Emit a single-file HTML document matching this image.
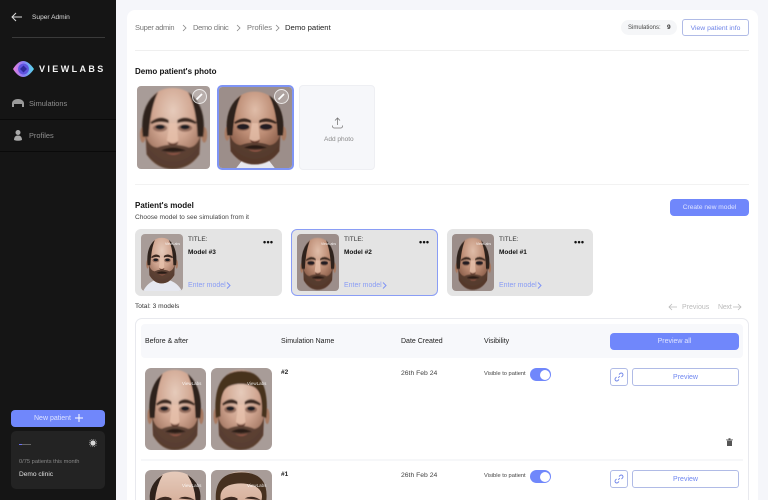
<!DOCTYPE html>
<html><head><meta charset="utf-8">
<style>
html,body{margin:0;padding:0;width:768px;height:500px;overflow:hidden}
#w{position:absolute;left:0;top:0;width:768px;height:500px;overflow:hidden;background:#f5f6fa;font-family:"Liberation Sans",sans-serif;color:#1c1c1c}
.a{position:absolute;white-space:nowrap;line-height:1}
.b{position:absolute;box-sizing:border-box}
.btn{position:absolute;box-sizing:border-box;background:#7087fb;color:#e8ecff;border-radius:4px;text-align:center;font-size:6.600px}
.out{position:absolute;box-sizing:border-box;background:#fff;border:1px solid #b0bbe6;border-radius:3px;color:#7087f0;text-align:center;font-size:7px}
svg{position:absolute;display:block}
.s{font-weight:bold}
.wm{position:absolute;white-space:nowrap;line-height:1;font-size:3.500px;color:#fff;opacity:.85}
</style></head><body><div id="w">
<svg width="0" height="0" style="position:absolute">
<defs>
<radialGradient id="sk" cx=".5" cy=".28" r=".72"><stop offset="0" stop-color="#e6cbbb"/><stop offset=".5" stop-color="#d0a590"/><stop offset="1" stop-color="#8f634f"/></radialGradient>
<radialGradient id="sk2" cx=".5" cy=".25" r=".72"><stop offset="0" stop-color="#e0bda9"/><stop offset=".5" stop-color="#bd8d75"/><stop offset="1" stop-color="#7a4e3b"/></radialGradient>
<linearGradient id="skt" x1="0" y1="0" x2="0" y2="1"><stop offset="0" stop-color="#e6cbbb"/><stop offset="1" stop-color="#d8b29e"/></linearGradient>
<filter id="bl" x="-5%" y="-5%" width="110%" height="110%"><feGaussianBlur stdDeviation=".7"/></filter>
<g id="feat">
<path d="M9 50Q12 62 21 63Q29 60 37 60Q46 60 54 63Q63 62 66 50L65 70Q54 85 37 85Q21 85 10 70Z" fill="#4c3428" opacity=".84"/>
<path d="M14 37Q24 29 33 35L33 38Q24 35 15 39Z" fill="#3e2a21"/><path d="M42 35Q51 29 62 37L61 39Q51 35 42 38Z" fill="#3e2a21"/>
<ellipse cx="24" cy="43" rx="7.500" ry="3.800" fill="#7d5748" opacity=".7"/><ellipse cx="50" cy="43" rx="7.500" ry="3.800" fill="#7d5748" opacity=".7"/>
<ellipse cx="24" cy="42" rx="5" ry="2.400" fill="#1f1d20"/><ellipse cx="50" cy="42" rx="5" ry="2.400" fill="#1f1d20"/>
<path d="M34 38L31 56Q37 60 43 56L41 38Z" fill="#e8c3ad" opacity=".75"/>
<path d="M32 57Q37 61 43 57L42 59.500Q37 62 33 59.500Z" fill="#5e382c"/>
<path d="M25 66Q37 60 51 66Q37 69 25 66Z" fill="#2c1b16"/><path d="M30 68Q37 70 46 68Q38 73 30 68Z" fill="#965848"/>
</g>
<g id="ears"><ellipse cx="6" cy="50" rx="3" ry="8" fill="#a87a62"/><ellipse cx="70" cy="50" rx="3" ry="8" fill="#a87a62"/></g>
<path id="skull" d="M8 42Q8 2 37 2Q66 2 67 42L65 70Q55 85 37 85Q20 85 10 70Z"/>
<g id="sides"><path d="M6 52Q2 20 22 6Q14 22 12 52Z" fill="#2f221b"/><path d="M69 52Q73 20 53 6Q62 22 63 52Z" fill="#2f221b"/></g>
<g id="lt"><g filter="url(#bl)"><use href="#ears"/><use href="#skull" fill="url(#sk)"/><use href="#sides"/><use href="#feat"/></g></g>
<g id="dk"><g filter="url(#bl)"><use href="#ears"/><use href="#skull" fill="url(#sk2)"/><use href="#sides"/><use href="#feat"/><ellipse cx="24" cy="42" rx="7" ry="3.300" fill="#241f22"/><ellipse cx="50" cy="42" rx="7" ry="3.300" fill="#241f22"/></g></g>
</defs></svg>
<svg width="0" height="0" style="position:absolute"><defs>
<symbol id="f" viewBox="0 0 76 85" preserveAspectRatio="none"><rect width="76" height="85" fill="#a89c98"/><use href="#lt"/></symbol>
<symbol id="d" viewBox="0 0 76 85" preserveAspectRatio="none"><rect width="76" height="85" fill="#9c8e8a"/><path d="M18 85L28 72H48L58 85Z" fill="#e8e8ee"/><use href="#dk" transform="translate(3,3) scale(.92)"/></symbol>
<symbol id="c" viewBox="0 0 76 85" preserveAspectRatio="none"><rect width="76" height="85" fill="#a89c98"/><path d="M4 85Q12 72 28 68H48Q66 72 74 85Z" fill="#e6e8f0"/><use href="#lt" transform="translate(7,4) scale(.82)"/></symbol>
<symbol id="m" viewBox="0 0 76 85" preserveAspectRatio="none"><rect width="76" height="85" fill="#9c8e8a"/><use href="#dk" transform="translate(3,4) scale(.93)"/></symbol>
<symbol id="h" viewBox="0 0 76 85" preserveAspectRatio="none"><rect width="76" height="85" fill="#a89c98"/><g filter="url(#bl)"><use href="#ears"/><use href="#skull" fill="url(#sk)"/><path d="M6 52Q1 3 38 3Q74 3 69 52L63 50Q66 24 52 19Q37 14 22 19Q10 24 12 50Z" fill="#46301f"/><use href="#feat"/></g></symbol>
</defs></svg>

<!-- sidebar -->
<div class="b" style="left:0;top:0;width:116px;height:500px;background:#151515"></div>
<svg style="left:11px;top:11px" width="12" height="12" viewBox="0 0 12 12" fill="none" stroke="#ddd" stroke-width="1"><path d="M11 6H1M5 2L1 6L5 10"/></svg>
<div class="a" style="left:32px;top:15px;font-size:6.600px;color:#ddd">Super Admin</div>
<div class="b" style="left:12px;top:37px;width:93px;height:1px;background:#3a3a3a"></div>
<svg style="left:13px;top:61px" width="21" height="16" viewBox="0 0 21 16"><defs><linearGradient id="lg" x1="0" x2="1"><stop offset="0" stop-color="#ea80de"/><stop offset=".5" stop-color="#8a7cf5"/><stop offset="1" stop-color="#56dcec"/></linearGradient></defs><path d="M0 8Q10 -8 21 8Q10 24 0 8Z" fill="url(#lg)"/><circle cx="10.500" cy="8" r="5.400" fill="#5f54e0"/><path d="M10.500 4.500L14 8L10.500 11.500L7 8Z" fill="#2f2a9c"/></svg>
<div class="a s" style="left:39px;top:64.500px;font-size:9px;color:#f2f2f2;letter-spacing:2.400px">VIEWLABS</div>
<svg style="left:12px;top:98px" width="12" height="10" viewBox="0 0 12 10"><path d="M0 9V5Q1 1 6 1Q11 1 12 5V9H10V6H2V9Z" fill="#9a9a9a"/></svg>
<div class="a" style="left:29px;top:100px;font-size:7.400px;color:#8f8f8f">Simulations</div>
<div class="b" style="left:0;top:119px;width:116px;height:1px;background:#0a0a0a"></div>
<svg style="left:14px;top:130px" width="8" height="11" viewBox="0 0 8 11"><circle cx="4" cy="2.500" r="2.500" fill="#aaa"/><path d="M0 10Q0 5.500 4 5.500Q8 5.500 8 10Q4 11.500 0 10Z" fill="#aaa"/></svg>
<div class="a" style="left:29px;top:132px;font-size:7.400px;color:#8f8f8f">Profiles</div>
<div class="b" style="left:0;top:151px;width:116px;height:1px;background:#0a0a0a"></div>
<div class="btn" style="left:11px;top:410px;width:94px;height:17px;line-height:18px;border-radius:4px;text-align:left;padding-left:23px;color:#dfe4ff;font-size:7px">New patient</div>
<svg style="left:75px;top:414px" width="8" height="8" viewBox="0 0 8 8" stroke="#fff" stroke-width="1"><path d="M4 0V8M0 4H8"/></svg>
<div class="b" style="left:11px;top:431px;width:94px;height:58px;background:#232323;border-radius:5px"></div>
<div class="b" style="left:19px;top:444px;width:12px;height:1px;background:#666"></div>
<div class="b" style="left:19px;top:444px;width:3px;height:1px;background:#6a70ef"></div>
<svg style="left:89px;top:439px" width="8" height="8" viewBox="0 0 8 8"><circle cx="4" cy="4" r="2.600" fill="#d8d8d8"/><circle cx="4" cy="4" r="3.800" fill="none" stroke="#aaa" stroke-width=".7" stroke-dasharray="1 1"/></svg>
<div class="a" style="left:19px;top:460px;font-size:5.700px;color:#888">0/75 patients this month</div>
<div class="a" style="left:19px;top:472px;font-size:6.600px;color:#e0e0e0">Demo clinic</div>

<!-- main card -->
<div class="b" style="left:127px;top:10px;width:631px;height:490px;background:#fff;border-radius:8px 8px 0 0"></div>

<div class="a" style="left:135px;top:23.500px;font-size:7.500px;letter-spacing:-.3px;color:#777">Super admin</div>
<svg style="left:182px;top:24px" width="5" height="8" viewBox="0 0 5 8" fill="none" stroke="#888" stroke-width=".8"><path d="M1 1L4 4L1 7"/></svg>
<div class="a" style="left:193px;top:23.500px;font-size:7.500px;letter-spacing:-.3px;color:#777">Demo clinic</div>
<svg style="left:236px;top:24px" width="5" height="8" viewBox="0 0 5 8" fill="none" stroke="#888" stroke-width=".8"><path d="M1 1L4 4L1 7"/></svg>
<div class="a" style="left:247px;top:23.500px;font-size:7.500px;color:#777">Profiles</div>
<svg style="left:275px;top:24px" width="5" height="8" viewBox="0 0 5 8" fill="none" stroke="#888" stroke-width=".8"><path d="M1 1L4 4L1 7"/></svg>
<div class="a" style="left:285px;top:23.500px;font-size:7.700px;color:#222">Demo patient</div>
<div class="b" style="left:621px;top:20px;width:56px;height:15px;border-radius:8px;background:#f5f6f8"></div>
<div class="a" style="left:628px;top:25px;font-size:6px;color:#444">Simulations:</div>
<div class="a s" style="left:667px;top:25px;font-size:6.500px;color:#333">9</div>
<div class="out" style="left:682px;top:19px;width:67px;height:17px;line-height:17px;color:#6f84e8;font-size:6.800px">View patient info</div>
<div class="b" style="left:135px;top:50px;width:614px;height:1px;background:#efefef"></div>

<div class="a s" style="left:135px;top:68px;font-size:8px;color:#111">Demo patient's photo</div>
<svg style="left:137px;top:86px;border-radius:4px" width="73" height="83"><use href="#f" width="73" height="83"/></svg>
<div class="b" style="left:192px;top:89px;width:15px;height:15px;border-radius:50%;background:rgba(255,255,255,.2);border:1px solid rgba(255,255,255,.75)"></div>
<svg style="left:195px;top:92px" width="9" height="9" viewBox="0 0 9 9"><path d="M1.500 7.500L7 2" stroke="#fff" stroke-width="1.800"/></svg>
<div class="b" style="left:217px;top:85px;width:77px;height:85px;border:2px solid #7f94f5;border-radius:5px;overflow:hidden"><svg style="left:0;top:0" width="73" height="81"><use href="#d" width="73" height="81"/></svg></div>
<div class="b" style="left:274px;top:89px;width:15px;height:15px;border-radius:50%;background:rgba(255,255,255,.2);border:1px solid rgba(255,255,255,.75)"></div>
<svg style="left:277px;top:92px" width="9" height="9" viewBox="0 0 9 9"><path d="M1.500 7.500L7 2" stroke="#fff" stroke-width="1.800"/></svg>
<div class="b" style="left:299px;top:85px;width:76px;height:85px;background:#f6f7fa;border:1px solid #eeeff3;border-radius:4px"></div>
<svg style="left:332px;top:117px" width="11" height="12" viewBox="0 0 11 12" fill="none" stroke="#777" stroke-width=".8"><path d="M5.500 8V1M3 3.500L5.500 1L8 3.500M.5 8.500Q.5 11 2 11H9Q10.500 11 10.500 8.500"/></svg>
<div class="a" style="left:324px;top:137px;font-size:6.500px;color:#8a8a8a">Add photo</div>
<div class="b" style="left:135px;top:184px;width:614px;height:1px;background:#f2f2f2"></div>

<div class="a s" style="left:135px;top:202px;font-size:8px;color:#111">Patient's model</div>
<div class="a" style="left:135px;top:215px;font-size:6.600px;color:#444">Choose model to see simulation from it</div>
<div class="btn" style="left:670px;top:199px;width:79px;height:17px;line-height:18px;color:#dfe4ff">Create new model</div>

<div class="b" style="left:135px;top:229px;width:147px;height:67px;background:#e4e4e4;border-radius:6px"></div>
<svg style="left:141px;top:234px;border-radius:4px" width="42" height="57"><use href="#c" width="42" height="57"/></svg>
<div class="wm" style="left:165px;top:243px">ViewLabs</div>
<div class="a" style="left:188px;top:237px;font-size:6.500px;color:#333">TITLE:</div>
<div class="a s" style="left:188px;top:250px;font-size:6.500px;color:#111">Model #3</div>
<div class="a" style="left:263px;top:238px;font-size:9px;font-weight:bold;color:#111;letter-spacing:.3px">•••</div>
<div class="a" style="left:188px;top:282px;font-size:7px;color:#8a9df5">Enter model</div>
<svg style="left:226px;top:282px" width="5" height="7" viewBox="0 0 5 7" fill="none" stroke="#7f94f5"><path d="M1 .5L4 3.500L1 6.500"/></svg>

<div class="b" style="left:291px;top:229px;width:147px;height:67px;background:#e4e4e4;border:1px solid #8a9df5;border-radius:6px"></div>
<svg style="left:297px;top:234px;border-radius:4px" width="42" height="57"><use href="#m" width="42" height="57"/></svg>
<div class="wm" style="left:321px;top:243px">ViewLabs</div>
<div class="a" style="left:344px;top:237px;font-size:6.500px;color:#333">TITLE:</div>
<div class="a s" style="left:344px;top:250px;font-size:6.500px;color:#111">Model #2</div>
<div class="a" style="left:419px;top:238px;font-size:9px;font-weight:bold;color:#111;letter-spacing:.3px">•••</div>
<div class="a" style="left:344px;top:282px;font-size:7px;color:#8a9df5">Enter model</div>
<svg style="left:382px;top:282px" width="5" height="7" viewBox="0 0 5 7" fill="none" stroke="#7f94f5"><path d="M1 .5L4 3.500L1 6.500"/></svg>

<div class="b" style="left:447px;top:229px;width:146px;height:67px;background:#e4e4e4;border-radius:6px"></div>
<svg style="left:452px;top:234px;border-radius:4px" width="42" height="57"><use href="#m" width="42" height="57"/></svg>
<div class="wm" style="left:476px;top:243px">ViewLabs</div>
<div class="a" style="left:499px;top:237px;font-size:6.500px;color:#333">TITLE:</div>
<div class="a s" style="left:499px;top:250px;font-size:6.500px;color:#111">Model #1</div>
<div class="a" style="left:574px;top:238px;font-size:9px;font-weight:bold;color:#111;letter-spacing:.3px">•••</div>
<div class="a" style="left:499px;top:282px;font-size:7px;color:#8a9df5">Enter model</div>
<svg style="left:537px;top:282px" width="5" height="7" viewBox="0 0 5 7" fill="none" stroke="#7f94f5"><path d="M1 .5L4 3.500L1 6.500"/></svg>

<div class="a" style="left:135px;top:304px;font-size:6.600px;color:#333">Total: 3 models</div>
<svg style="left:668px;top:303px" width="9" height="8" viewBox="0 0 9 8" fill="none" stroke="#bbb" stroke-width=".8"><path d="M9 4H1M4 1L1 4L4 7"/></svg>
<div class="a" style="left:682px;top:304px;font-size:7px;color:#bbb">Previous</div>
<div class="a" style="left:718px;top:304px;font-size:7px;letter-spacing:-.2px;color:#bbb">Next</div>
<svg style="left:733px;top:303px" width="9" height="8" viewBox="0 0 9 8" fill="none" stroke="#bbb" stroke-width=".8"><path d="M0 4H8M5 1L8 4L5 7"/></svg>

<!-- table -->
<div class="b" style="left:135px;top:318px;width:614px;height:182px;border:1px solid #e8e9ee;border-bottom:0;border-radius:7px 7px 0 0"></div>
<div class="b" style="left:141px;top:324px;width:602px;height:34px;background:#f7f8fb;border-radius:4px"></div>
<div class="a" style="left:145px;top:338px;font-size:7px;color:#222">Before &amp; after</div>
<div class="a" style="left:281px;top:338px;font-size:7px;color:#222">Simulation Name</div>
<div class="a" style="left:401px;top:338px;font-size:7px;color:#222">Date Created</div>
<div class="a" style="left:484px;top:338px;font-size:7px;color:#222">Visibility</div>
<div class="btn" style="left:610px;top:333px;width:129px;height:17px;line-height:18px;color:#dfe4ff;font-size:7px">Preview all</div>

<svg style="left:145px;top:368px;border-radius:6px" width="61" height="82"><use href="#f" width="61" height="82"/></svg>
<svg style="left:211px;top:368px;border-radius:6px" width="61" height="82"><use href="#h" width="61" height="82"/></svg>
<div class="wm" style="left:182px;top:382px;font-size:4.500px">ViewLabs</div>
<div class="wm" style="left:247px;top:382px;font-size:4.500px">ViewLabs</div>
<div class="a s" style="left:281px;top:370px;font-size:6.500px;color:#222">#2</div>
<div class="a" style="left:401px;top:371px;font-size:6.800px;color:#444">26th Feb 24</div>
<div class="a" style="left:484px;top:372px;font-size:5.700px;color:#444">Visible to patient</div>
<div class="b" style="left:530px;top:368px;width:21px;height:13px;background:#7087fb;border-radius:7px"></div>
<div class="b" style="left:540px;top:369.500px;width:10px;height:10px;background:#fff;border-radius:50%"></div>
<div class="out" style="left:610px;top:368px;width:18px;height:18px"></div>
<svg style="left:614px;top:372px" width="10" height="10" viewBox="0 0 10 10" fill="none" stroke="#6f84e8" stroke-width=".9"><path d="M4.200 5.800L5.800 4.200M5 2.500L6 1.500Q7.300.5 8.500 1.500Q9.500 2.700 8.500 4L7.500 5M2.500 5L1.500 6Q.5 7.300 1.500 8.500Q2.700 9.500 4 8.500L5 7.500"/></svg>
<div class="out" style="left:632px;top:368px;width:107px;height:18px;line-height:18px">Preview</div>
<svg style="left:726px;top:438px" width="7" height="8" viewBox="0 0 7 8"><path d="M0 1.500H7V2.300H0ZM2.500.3H4.500V1.500H2.500ZM1 2.600H6V8H1Z" fill="#555"/></svg>
<div class="b" style="left:141px;top:459px;width:602px;height:2px;background:#f6f7f9"></div>

<svg style="left:145px;top:470px;border-radius:6px 6px 0 0" width="61" height="30" viewBox="0 0 76 37" preserveAspectRatio="none"><rect width="76" height="37" fill="#a89c98"/><path d="M8.500 37Q9 2 37 2Q66 2 66.500 37Z" fill="url(#skt)"/><path d="M6 37Q4 18 22 6Q14 20 12.500 37Z" fill="#2f221b"/><path d="M69 37Q71 18 53 6Q62 20 63 37Z" fill="#2f221b"/><path d="M14 37Q24 30 33 35L33 37Z" fill="#3e2a21"/><path d="M42 35Q51 30 62 37Z" fill="#3e2a21"/></svg>
<svg style="left:211px;top:470px;border-radius:6px 6px 0 0" width="61" height="30" viewBox="0 0 76 37" preserveAspectRatio="none"><rect width="76" height="37" fill="#a89c98"/><path d="M8.500 37Q9 2 37 2Q66 2 66.500 37Z" fill="url(#skt)"/><path d="M6 37Q4 3 38 3Q72 3 69 37H63Q66 24 52 19Q37 14 22 19Q10 24 12 37Z" fill="#46301f"/><path d="M14 37Q24 30 33 35L33 37Z" fill="#3e2a21"/><path d="M42 35Q51 30 62 37Z" fill="#3e2a21"/></svg>
<div class="wm" style="left:182px;top:484px;font-size:4.500px">ViewLabs</div>
<div class="wm" style="left:247px;top:484px;font-size:4.500px">ViewLabs</div>
<div class="a s" style="left:281px;top:472px;font-size:6.500px;color:#222">#1</div>
<div class="a" style="left:401px;top:473px;font-size:6.800px;color:#444">26th Feb 24</div>
<div class="a" style="left:484px;top:474px;font-size:5.700px;color:#444">Visible to patient</div>
<div class="b" style="left:530px;top:470px;width:21px;height:13px;background:#7087fb;border-radius:7px"></div>
<div class="b" style="left:540px;top:471.500px;width:10px;height:10px;background:#fff;border-radius:50%"></div>
<div class="out" style="left:610px;top:470px;width:18px;height:18px"></div>
<svg style="left:614px;top:474px" width="10" height="10" viewBox="0 0 10 10" fill="none" stroke="#6f84e8" stroke-width=".9"><path d="M4.200 5.800L5.800 4.200M5 2.500L6 1.500Q7.300.5 8.500 1.500Q9.500 2.700 8.500 4L7.500 5M2.500 5L1.500 6Q.5 7.300 1.500 8.500Q2.700 9.500 4 8.500L5 7.500"/></svg>
<div class="out" style="left:632px;top:470px;width:107px;height:18px;line-height:18px">Preview</div>
</div></body></html>
